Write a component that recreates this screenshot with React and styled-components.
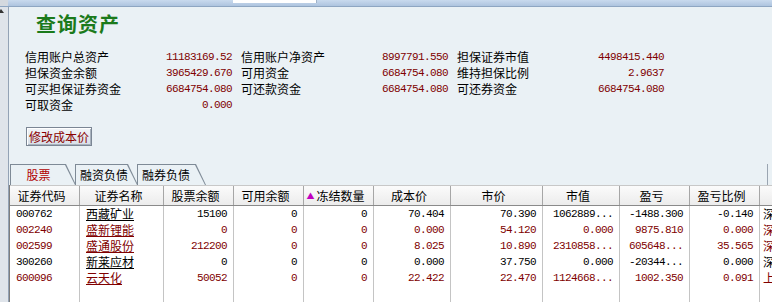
import React from "react";
import styled, { createGlobalStyle } from "styled-components";

const Global = createGlobalStyle`
  html, body { margin: 0; padding: 0; }
  body {
    width: 772px; height: 302px; overflow: hidden;
    background: #eaf1f5;
    font-family: "Noto Sans CJK SC", "Noto Sans", sans-serif;
    font-size: 12px; color: #000;
  }
`;

const Frame = styled.div`
  display: flex; flex-direction: column; width: 772px; height: 302px; overflow: hidden;
`;

const TopBar = styled.div`
  height: 6px; flex: none; display: flex;
  background: linear-gradient(#c9daee, #aec4df);
  border-bottom: 1px solid #8ea6c2;
`;
const TopGray = styled.div`width: 8px; background: #d4d9df;`;
const TopInput = styled.div`
  margin-left: 225px; width: 83px; height: 3px; background: #fff;
  border-right: 1px solid #9fb2c8;
`;

const Body = styled.div`flex: 1; display: flex; min-height: 0;`;

const LeftStrip = styled.div`
  width: 8px; flex: none; background: #dfe4ea; border-right: 1px solid #93a2b5;
`;
const Arrow = styled.div`
  margin-top: 2px; width: 0; height: 0;
  border-left: 3px solid transparent; border-right: 3px solid transparent;
  border-bottom: 4px solid #333; margin-left: -2px;
`;

const Main = styled.div`
  flex: 1; display: flex; flex-direction: column; padding-top: 5px; min-width: 0;
`;

const Title = styled.h1`
  margin: 0 0 0 27px; font-size: 20px; line-height: 24px; font-weight: 700;
  color: #1b7a1b; letter-spacing: 1px;
`;

const InfoGrid = styled.div`
  margin: 13px 0 0 16px; display: grid;
  grid-template-columns: repeat(3, 207px); column-gap: 9px;
  grid-auto-rows: 16px;
`;
const InfoItem = styled.div`
  display: flex; justify-content: space-between; align-items: center; line-height: 16px;
`;
const Num = styled.span`
  font-family: "Liberation Mono", monospace; font-size: 11px; letter-spacing: -0.6px;
  color: ${p => p.$c || "#800000"};
`;

const Button = styled.button`
  margin: 14px 0 0 17px; align-self: flex-start; height: 21px; width: 66px; padding: 0;
  font-family: inherit; font-size: 12px; color: #8b0000;
  background: linear-gradient(#f2f5f8, #d7dfe8);
  border: 1px solid #7b8694; box-shadow: inset 1px 1px 0 #fff, inset -1px -1px 0 #a8b2bd;
`;

const TabBar = styled.div`
  margin: 18px 4px 0 1px; height: 21px; display: flex; align-items: flex-end;
  border-right: 1px solid #9aa5b1;
`;
const Tab = styled.div`
  width: ${p => p.$w}px; height: 21px; background: #7e8a96;
  clip-path: polygon(0 0, calc(100% - 10px) 0, 100% 100%, 0 100%);
  margin-left: ${p => (p.$first ? "0" : "-1px")}; flex: none; display: flex;
`;
const TabInner = styled.div`
  flex: 1; margin: 1px 0 0 1px; background: #eaf1f5;
  clip-path: polygon(0 0, calc(100% - 11px) 0, calc(100% - 1px) 100%, 0 100%);
  display: flex; align-items: center; justify-content: ${p => (p.$center ? "center" : "flex-start")};
  padding: 0 ${p => (p.$center ? "10px" : "0")} 0 ${p => (p.$center ? "0" : "4px")};
  color: ${p => (p.$active ? "#b00000" : "#000")}; line-height: 20px;
`;

const Table = styled.div`
  background: #fff; border-left: 1px solid #7d7d7d; flex: 1;
`;
const Row = styled.div`
  display: grid;
  grid-template-columns: 70px 84px 70px 70px 70px 77px 92px 77px 70px 70px 1fr;
  height: ${p => (p.$head ? "21px" : "16px")};
  background: ${p => (p.$head ? "linear-gradient(#fbfbfb, #ececec)" : "#fff")};
  border-bottom: ${p => (p.$head ? "1px solid #8a8a8a" : "none")};
  border-top: ${p => (p.$head ? "1px solid #c8c8c8" : "none")};
  box-sizing: border-box;
  color: ${p => p.$c || "#000"};
`;
const Cell = styled.div`
  box-sizing: border-box;
  border-right: ${p => (p.$last ? "none" : `1px solid ${p.$head ? "#a6a6a6" : "#c4c4c4"}`)};
  overflow: hidden; white-space: nowrap;
  padding: 0 6px 0 ${p => (p.$align === "left" ? "6px" : "0")};
  text-align: ${p => p.$align || "right"};
  line-height: ${p => (p.$head ? "19px" : "16px")};
  ${p => p.$mono && `font-family: "Liberation Mono", monospace; font-size: 11px; letter-spacing: -0.6px;`}
  ${p => p.$link && `text-decoration: underline; text-underline-offset: 1px;`}
  ${p => p.$last && `padding: 0 0 0 3px; text-align: left;`}
`;
const Sort = styled.span`
  color: #c000c0; font-size: 8px; margin-right: 2px; vertical-align: 2px;
`;

const info = [
  ["信用账户总资产", "11183169.52"], ["信用账户净资产", "8997791.550"], ["担保证券市值", "4498415.440"],
  ["担保资金余额", "3965429.670"], ["可用资金", "6684754.080"], ["维持担保比例", "2.9637"],
  ["可买担保证券资金", "6684754.080"], ["可还款资金", "6684754.080"], ["可还券资金", "6684754.080"],
  ["可取资金", "0.000"],
];

const heads = ["证券代码", "证券名称", "股票余额", "可用余额", "冻结数量", "成本价", "市价", "市值", "盈亏", "盈亏比例", ""];

const RED = "#800000";
const rows = [
  ["000762", "西藏矿业", "15100", "0", "0", "70.404", "70.390", "1062889...", "-1488.300", "-0.140", "深", "#000"],
  ["002240", "盛新锂能", "0", "0", "0", "0.000", "54.120", "0.000", "9875.810", "0.000", "深", RED],
  ["002599", "盛通股份", "212200", "0", "0", "8.025", "10.890", "2310858...", "605648...", "35.565", "深", RED],
  ["300260", "新莱应材", "0", "0", "0", "0.000", "37.750", "0.000", "-20344...", "0.000", "深", "#000"],
  ["600096", "云天化", "50052", "0", "0", "22.422", "22.470", "1124668...", "1002.350", "0.091", "上", RED],
];

const tabs = [
  { label: "股票", w: 66, active: true, center: true },
  { label: "融资负债", w: 63 },
  { label: "融券负债", w: 69 },
];

export default function App() {
  return (
    <Frame>
      <Global />
      <TopBar>
        <TopGray />
        <TopInput />
      </TopBar>
      <Body>
        <LeftStrip><Arrow /></LeftStrip>
        <Main>
          <Title>查询资产</Title>
          <InfoGrid>
            {info.map(([l, v]) => (
              <InfoItem key={l}>
                <span>{l}</span>
                <Num>{v}</Num>
              </InfoItem>
            ))}
          </InfoGrid>
          <Button>修改成本价</Button>
          <TabBar>
            {tabs.map((t, i) => (
              <Tab key={t.label} $w={t.w} $first={i === 0}>
                <TabInner $active={t.active} $center={t.center}>{t.label}</TabInner>
              </Tab>
            ))}
          </TabBar>
          <Table>
            <Row $head>
              {heads.map((h, i) => (
                <Cell key={i} $head $align="center" $last={i === 10}>
                  {i === 4 && <Sort>▲</Sort>}{h}
                </Cell>
              ))}
            </Row>
            {rows.map(r => (
              <Row key={r[0]} $c={r[11]}>
                <Cell $align="left" $mono>{r[0]}</Cell>
                <Cell $align="left" $link>{r[1]}</Cell>
                {r.slice(2, 10).map((v, i) => (
                  <Cell key={i} $mono>{v}</Cell>
                ))}
                <Cell $last>{r[10]}</Cell>
              </Row>
            ))}
            <Row>
              {heads.map((_, i) => <Cell key={i} $last={i === 10} />)}
            </Row>
          </Table>
        </Main>
      </Body>
    </Frame>
  );
}
